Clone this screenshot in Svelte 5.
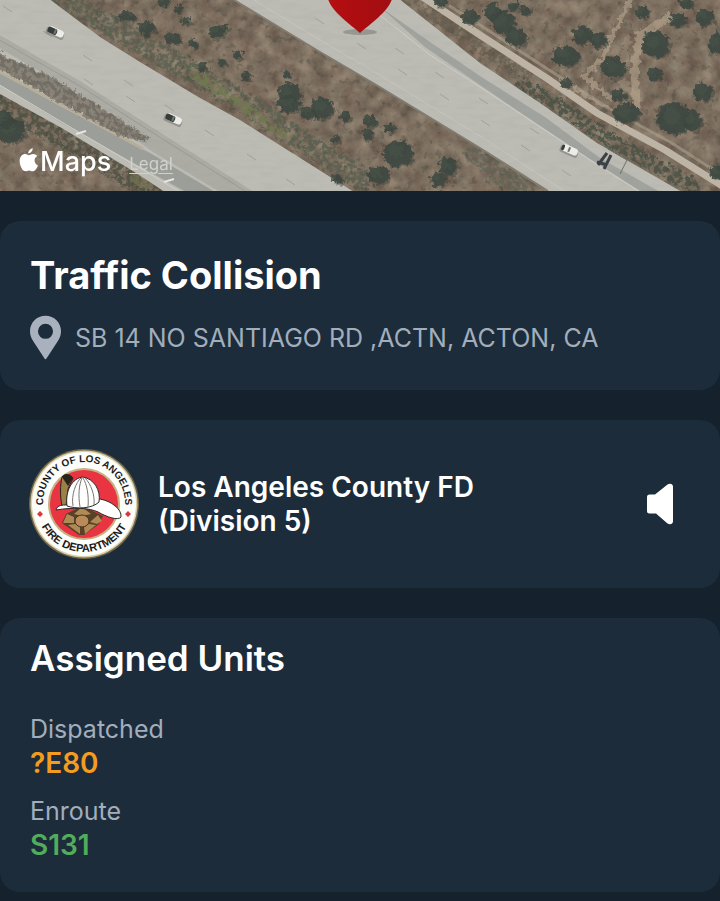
<script>
  const incident = {
    type: 'Traffic Collision',
    address: 'SB 14 NO SANTIAGO RD ,ACTN, ACTON, CA',
    agency: ['Los Angeles County FD', '(Division 5)'],
  };

  const units = [
    { status: 'Dispatched', id: '?E80', tone: 'orange' },
    { status: 'Enroute', id: 'S131', tone: 'green' },
  ];

  // [x, y, radius x, radius y]
  const trees = [
    [289, 93, 11, 10], [289, 104, 12, 8], [322, 108, 11, 11], [308, 113, 8, 6],
    [345, 117, 5, 5], [370, 121, 7, 6], [367, 134, 6, 6], [389, 128, 5, 5],
    [335, 139, 5, 4], [287, 74, 4, 3], [246, 77, 4, 5], [398, 153, 15, 13],
    [378, 175, 11, 9], [337, 179, 5, 5], [438, 179, 8, 7], [448, 166, 9, 9],
    [493, 12, 9, 9], [503, 22, 12, 11], [516, 37, 11, 9], [525, 11, 5, 5],
    [514, 6, 6, 5], [440, 2, 7, 5], [470, 17, 8, 7], [566, 56, 14, 10],
    [582, 35, 10, 9], [598, 40, 9, 8], [614, 68, 12, 11], [655, 44, 14, 13],
    [654, 74, 7, 8], [642, 12, 6, 7], [677, 20, 8, 7], [705, 17, 9, 8],
    [703, 92, 10, 9], [674, 118, 17, 16], [692, 120, 9, 11], [626, 113, 14, 10],
    [716, 43, 7, 10], [686, 3, 7, 5], [717, 172, 8, 7], [618, 95, 7, 6],
    [567, 83, 6, 4], [146, 28, 8, 7], [124, 16, 6, 4], [173, 38, 8, 6],
    [193, 44, 4, 4], [216, 32, 8, 6], [178, 9, 4, 5], [202, 67, 5, 4],
    [163, 2, 6, 4], [222, 62, 4, 3], [238, 55, 5, 4], [10, 130, 15, 12],
    [4, 119, 8, 8], [132, 18, 5, 4], [186, 21, 5, 3], [225, 28, 4, 4],
  ];

  // lane dashes: start x, start y
  const dashes = [
    [3, 6], [43, 31], [83, 55], [124, 80], [165, 105], [205, 130], [247, 154], [286, 179],
    [84, 79], [126, 96], [315, 18], [357, 43], [398, 69], [440, 94], [481, 120],
    [521, 145], [562, 170], [395, 48], [435, 72], [479, 98], [530, 128],
  ];

  const cars = [
    { x: 55, y: 32, dark: true },
    { x: 173, y: 119, dark: true },
    { x: 569, y: 150, dark: false },
  ];
</script>

<main>
  <section class="map" aria-label="Incident map">
    <svg class="imagery" viewBox="0 0 720 191" preserveAspectRatio="xMidYMid slice" aria-hidden="true">
      <defs>
        <filter id="ground" x="0" y="0" width="100%" height="100%" color-interpolation-filters="sRGB">
          <feTurbulence type="fractalNoise" baseFrequency="0.07" numOctaves="5" seed="8" />
          <feColorMatrix values="0.24 0.1 0 0 0.32  0.25 0.06 0 0 0.28  0.22 0.05 0 0 0.24  0 0 0 0 1" />
        </filter>
        <filter id="speckle" x="0" y="0" width="100%" height="100%" color-interpolation-filters="sRGB">
          <feTurbulence type="fractalNoise" baseFrequency="0.14" numOctaves="3" seed="21" />
          <feColorMatrix values="0 0 0 0 0.28  0 0 0 0 0.28  0 0 0 0 0.24  0 7 0 0 -4.3" result="dots" />
          <feComposite in="dots" in2="SourceGraphic" operator="in" />
        </filter>
        <filter id="scrub" x="-5%" y="-5%" width="110%" height="110%" color-interpolation-filters="sRGB">
          <feTurbulence type="fractalNoise" baseFrequency="0.2" numOctaves="3" seed="5" result="n" />
          <feDisplacementMap in="SourceGraphic" in2="n" scale="9" xChannelSelector="R" yChannelSelector="G" />
          <feGaussianBlur stdDeviation="0.6" />
        </filter>
        <filter id="brush" x="-5%" y="-5%" width="110%" height="110%" color-interpolation-filters="sRGB">
          <feTurbulence type="fractalNoise" baseFrequency="0.22" numOctaves="3" seed="12" result="n" />
          <feDisplacementMap in="SourceGraphic" in2="n" scale="12" xChannelSelector="R" yChannelSelector="G" result="d" />
          <feColorMatrix in="n" values="0 0 0 0 0  0 0 0 0 0  0 0 0 0 0  0 6 0 0 -2.4" result="mask" />
          <feComposite in="d" in2="mask" operator="in" />
          <feGaussianBlur stdDeviation="0.6" />
        </filter>
        <filter id="grain" x="0" y="0" width="100%" height="100%" color-interpolation-filters="sRGB">
          <feTurbulence type="fractalNoise" baseFrequency="0.05 0.2" numOctaves="2" seed="3" />
          <feColorMatrix values="0 0 0 0 0.5  0 0 0 0 0.5  0 0 0 0 0.48  0.6 0 0 0 -0.25" result="g" />
          <feComposite in="g" in2="SourceGraphic" operator="in" />
        </filter>
        <linearGradient id="pin" x1="0" x2="1">
          <stop offset="0" stop-color="#b50f13" />
          <stop offset="0.5" stop-color="#ab0d10" />
          <stop offset="1" stop-color="#a01013" />
        </linearGradient>
      </defs>

      <rect width="720" height="191" filter="url(#ground)" />

      <!-- greener brush along the shoulders -->
      <g filter="url(#brush)" fill="none">
        <path d="M56-6 108 26 150 49 210 84 252 108 372 188" stroke="#545d4d" stroke-width="22" opacity="0.75" />
        <path d="M190 72 244 108 290 140" stroke="#737d50" stroke-width="10" opacity="0.8" />
        <path d="M-4 104 60 138 130 180 160 200" stroke="#4b5042" stroke-width="20" opacity="0.8" />
        <path d="M130 176 150 188" stroke="#747c50" stroke-width="10" opacity="0.7" />
        <path d="M390 80 440 112 500 150 556 188" stroke="#56594f" stroke-width="16" opacity="0.8" />
        <path d="M470 145 500 172 530 196" stroke="#596154" stroke-width="26" opacity="0.6" />
        <path d="M515 84 560 107 608 140 700 190" stroke="#4b5447" stroke-width="15" opacity="0.9" />
        <path d="M420 5 480 48 530 80" stroke="#5d5a4c" stroke-width="12" opacity="0.6" />
      </g>
      <rect width="720" height="191" filter="url(#speckle)" opacity="0.35" />

      <!-- dirt tracks -->
      <g filter="url(#scrub)" fill="none" stroke="#b5a58d" stroke-linecap="round">
        <path d="M632-3 613 33 603 58 584 76 610 98" stroke-width="5" opacity="0.6" />
        <path d="M668 18 640 35 634 70 637 104" stroke-width="8" opacity="0.6" />
        <path d="M627 38 622 82 640 100" stroke-width="7" opacity="0.3" />
        <path d="M560 80 606 108" stroke-width="3" opacity="0.6" />
      </g>
      <g fill="none">
        <path d="M440 0 480 25 532 59 610 109 670 142 720 174" stroke="#aaa08e" stroke-width="3" opacity="0.6" />
        <path d="M421-4 480 35 548 79 597 113 665 150 724 187" stroke="#bdb4a5" stroke-width="7" />
      </g>

      <!-- southbound lanes and frontage road -->
      <path d="M-2-2H48L100 37 140 62 200 98 240 120 354 192H165L133 171 60 127-2 93Z" fill="#bcbcb5" />
      <path d="M-2 72 60 106 150 153 215 192H186L130 161 60 122-2 84Z" fill="#9c9e99" />
      <path d="M-2 34 80 81 150 126 254 192H220L150 150 80 95-2 47Z" fill="#acaca5" />
      <path d="M-4 38 80 86 150 131 245 191" fill="none" stroke="#999b95" stroke-width="1" />
      <path d="M-2 84 60 121 130 162 180 192" fill="none" stroke="#d0d0c9" stroke-width="1" />
      <path d="M-2 71 60 104 143 149" fill="none" stroke="#b7ae9a" stroke-width="3" />
      <path filter="url(#scrub)" d="M-6 52 40 72 80 94 147 137 146 143 120 136 70 108-6 66Z" fill="#8a8377" />
      <path filter="url(#brush)" d="M-6 52 40 72 80 94 147 137 146 143 120 136 70 108-6 66Z" fill="#5d5a54" opacity="0.5" />
      <path d="M76 134 86 131M164 182 174 179" stroke="#e6e6df" stroke-width="2" />

      <!-- northbound lanes -->
      <path d="M230-2H398L480 63 540 103 597 143 682 192H548L480 148 373 83 320 52Z" fill="#bcbcb5" />
      <path d="M380 7 430 42 480 76 545 117 600 158 660 192H642L590 159 530 119 480 85 425 47Z" fill="#a1a39e" />
      <path d="M376 12 430 55 480 87 590 160 640 192" fill="none" stroke="#cfcfc8" stroke-width="1" />
      <path d="M234 0 320 52 373 83 480 148 548 191" fill="none" stroke="#817b70" stroke-width="2" />
      <path d="M254 0 320 40 373 71 480 136 564 191" fill="none" stroke="#c6c6bf" stroke-width="1" />

      <path d="M0 0H48L240 120 354 191H200L0 60ZM234 0H398L480 63 682 191H548L373 83Z" filter="url(#grain)" opacity="0.3" />

      {#each dashes as [x, y]}
        <path d="M{x} {y}l9 6" stroke="#9fa19b" stroke-width="1" />
      {/each}

      <g filter="url(#scrub)">
        {#each trees as [x, y, rx, ry]}
          <ellipse cx={x + 2} cy={y + 2} {rx} {ry} fill="#343b34" opacity="0.4" />
          <ellipse cx={x} cy={y} {rx} {ry} fill="#3c4841" opacity="0.85" />
          <ellipse cx={x - 2} cy={y - 2} rx={rx / 2} ry={ry / 2} fill="#475449" opacity="0.6" />
        {/each}
      </g>

      {#each cars as car}
        <g transform="translate({car.x} {car.y}) rotate(24)">
          <rect x="-9" y="-2" width="19" height="7" rx="2" fill="#777973" opacity="0.6" />
          <rect x="-8" y="-4" width="17" height="7" rx="3" fill="#ecece8" />
          <rect x="-8" y="-3" width={car.dark ? 10 : 3} height="6" rx="2" fill="#363c39" />
          <rect x="-1" y="-3" width="2" height="5" fill="#727772" />
        </g>
      {/each}

      <!-- overhead sign gantry -->
      <path d="M598 165 607 153M604 169 611 155M597 162 607 165" stroke="#3a4046" stroke-width="3" />
      <path d="M608 149 627 160 620 174" fill="none" stroke="#6e706b" stroke-width="1" />

      <!-- incident pin -->
      <ellipse cx="360" cy="32" rx="17" ry="3" fill="#6b6c69" opacity="0.45" />
      <path d="M328-1C332 12 350 24 360 33 370 24 388 12 392-1Z" fill="url(#pin)" />
    </svg>

    <div class="attribution">
      <span class="brand">
        <svg viewBox="0 0 20 24" aria-hidden="true">
          <path d="M13.7 0.3C13.9 2.4 12.3 5.2 9.3 5.5 9.1 3.2 11.1 0.8 13.7 0.3ZM9.7 7.2C11.1 7.2 12.1 6 14.2 6 16.1 6 17.4 7 18.2 8.1 14.2 10.4 15 16 19 17.5 17.9 20.2 16 23.3 13.8 23.3 12.4 23.3 11.8 22.4 10.1 22.4 8.4 22.4 7.6 23.3 6.4 23.3 3.7 23.3 0.7 18 0.7 13.2 0.7 8.7 3.4 6.1 6.1 6.1 7.8 6.1 8.9 7.2 9.7 7.2Z" />
        </svg>
        <span>Maps</span>
      </span>
      <a href="#legal">Legal</a>
    </div>
  </section>

  <div class="cards">
    <section class="card summary">
      <h1>{incident.type}</h1>
      <p class="address">
        <svg viewBox="0 0 32 45" aria-hidden="true">
          <path fill-rule="evenodd" d="M16 0C7 0 0 7 0 16 0 20 1.3 23 3.2 26L14.8 44Q16 46 17.2 44L28.8 26C30.7 23 32 20 32 16 32 7 25 0 16 0ZM16 8.3A7.8 7.8 0 1 1 16 23.9 7.8 7.8 0 0 1 16 8.3Z" />
        </svg>
        <span>{incident.address}</span>
      </p>
    </section>

    <section class="card agency">
      <svg class="seal" viewBox="-56 -56 112 112" role="img" aria-label="County of Los Angeles Fire Department">
        <defs>
          <path id="arc-top" d="M-40 8A41 41 0 1 1 40 8" />
          <path id="arc-bottom" d="M-48 0A48 48 0 0 0 48 0" />
        </defs>
        <circle r="55" fill="#6d6647" />
        <circle r="53.5" fill="#d9cfaa" />
        <circle r="52" fill="#fdfdfa" />
        <circle r="36" fill="#c5b184" />
        <circle r="34" fill="#e93442" />
        <text class="upper"><textPath href="#arc-top" startOffset="50%">COUNTY OF LOS ANGELES</textPath></text>
        <text class="lower"><textPath href="#arc-bottom" startOffset="50%">FIRE DEPARTMENT</textPath></text>
        <path d="M-44 7 -41 10 -44 13 -47 10ZM44 7 47 10 44 13 41 10Z" fill="#d9343f" />
        <!-- badge below the helmet -->
        <path d="M-2 2 19 12 15 20 0 31-5 31-22 19-18 10Z" fill="#5a4026" />
        <path d="M-2 3-10 10-2 12 7 10ZM-17 10-21 19-10 19-10 13ZM14 11 18 17 13 20 6 18ZM-16 21-4 30-4 23-9 20ZM12 21 1 30 0 23 5 20Z" fill="#ae8a55" />
        <ellipse cx="-2" cy="17" rx="7" ry="6" fill="#b98b59" stroke="#4a3420" />
        <!-- helmet -->
        <path d="M-22-27C-19-31-14-30-11-26L-16-15-18 2-22 2C-24-8-24-18-22-27Z" fill="#9a8148" stroke="#2a241b" />
        <path d="M-22-27C-19-31-14-30-11-26L-16-18Z" fill="#27231d" />
        <path d="M-28 6C-27 2-23 1-19 1L16-5C27-3 38 5 37 13 34 17 23 13 14 8 6 4-10 3-28 6Z" fill="#fff" stroke="#2b2926" />
        <path d="M-17 2C-19-13-12-26-1-27 10-25 17-14 15-2 8 5-8 5-17 2Z" fill="#fff" stroke="#2b2926" />
        <path d="M-11 2C-13-9-8-22-3-26M-4 3C-6-9-5-19-2-26M4 3C5-8 3-20-1-26M10 1C11-9 7-20 1-26" fill="none" stroke="#797670" />
      </svg>
      <h2>
        {#each incident.agency as line}
          <span>{line}</span>
        {/each}
      </h2>
      <button type="button" aria-label="Play dispatch audio">
        <svg viewBox="0 0 28 42" aria-hidden="true">
          <path d="M3.500 11.500H9L21.200 1.800C23.500 0 27 0.500 27 3.800V38.200C27 41.500 23.500 42 21.200 40.200L10 30.500H3.500Q1 30.500 1 28V14Q1 11.500 3.500 11.500Z" />
        </svg>
      </button>
    </section>

    <section class="card units">
      <h2>Assigned Units</h2>
      <dl>
        {#each units as unit}
          <div>
            <dt>{unit.status}</dt>
            <dd class={unit.tone}>{unit.id}</dd>
          </div>
        {/each}
      </dl>
    </section>
  </div>
</main>

<style>
  :global(body) {
    margin: 0;
    background: #15212d;
  }

  main {
    font-family: Inter, "Liberation Sans", sans-serif;
    color: #fff;
  }

  h1,
  h2,
  p,
  dl,
  dd {
    margin: 0;
  }

  .map {
    position: relative;
    height: 191px;
    overflow: hidden;
    background: #85776a;
  }

  .imagery {
    display: block;
    width: 100%;
    height: 100%;
  }

  .attribution {
    position: absolute;
    left: 19px;
    bottom: 12px;
    display: flex;
    align-items: center;
    gap: 18px;
  }

  .brand {
    display: flex;
    align-items: center;
    gap: 1px;
    font-size: 27px;
    font-weight: 500;
    line-height: 34px;
  }

  .brand svg {
    width: 20px;
    height: 24px;
    margin-bottom: 4px;
    fill: #fff;
  }

  .attribution a {
    color: #d0d1cd;
    font-size: 17px;
    line-height: 20px;
    text-underline-offset: 3px;
    margin-top: 4px;
  }

  .cards {
    display: flex;
    flex-direction: column;
    gap: 30px;
    padding: 30px 0 8px;
  }

  .card {
    padding: 30px;
    border-radius: 20px;
    background: #1c2c3b;
  }

  h1 {
    font-size: 38px;
    font-weight: 700;
    line-height: 48px;
  }

  .address {
    display: flex;
    align-items: center;
    gap: 14px;
    margin-top: 16px;
    color: #a2aebc;
    font-size: 25px;
    line-height: 32px;
  }

  .address svg {
    flex: none;
    width: 31px;
    height: 45px;
    fill: #a9b1be;
  }

  .agency {
    display: flex;
    align-items: center;
    gap: 18px;
    padding: 28px 46px 28px 28px;
  }

  .seal {
    flex: none;
    width: 112px;
    height: 112px;
  }

  .seal text {
    font-family: "Liberation Sans", sans-serif;
    font-weight: 700;
    text-anchor: middle;
    fill: #1c1b1e;
  }

  .upper {
    font-size: 10px;
  }

  .lower {
    font-size: 11px;
  }

  .agency h2 {
    flex: 1;
    font-size: 28px;
    font-weight: 600;
    line-height: 34px;
  }

  .agency h2 span {
    display: block;
  }

  button {
    display: flex;
    padding: 0;
    border: 0;
    background: none;
    cursor: pointer;
  }

  button svg {
    width: 28px;
    height: 42px;
    fill: #fff;
  }

  .units {
    padding: 18px 30px 30px;
  }

  .units h2 {
    font-size: 35px;
    font-weight: 600;
    line-height: 44px;
  }

  dl {
    display: flex;
    flex-direction: column;
    gap: 14px;
    margin-top: 32px;
  }

  dt {
    color: #a2aebc;
    font-size: 25px;
    line-height: 34px;
  }

  dd {
    font-size: 28px;
    font-weight: 600;
    line-height: 34px;
  }

  .orange {
    color: #f39c1f;
  }

  .green {
    color: #52ad5b;
  }
</style>
